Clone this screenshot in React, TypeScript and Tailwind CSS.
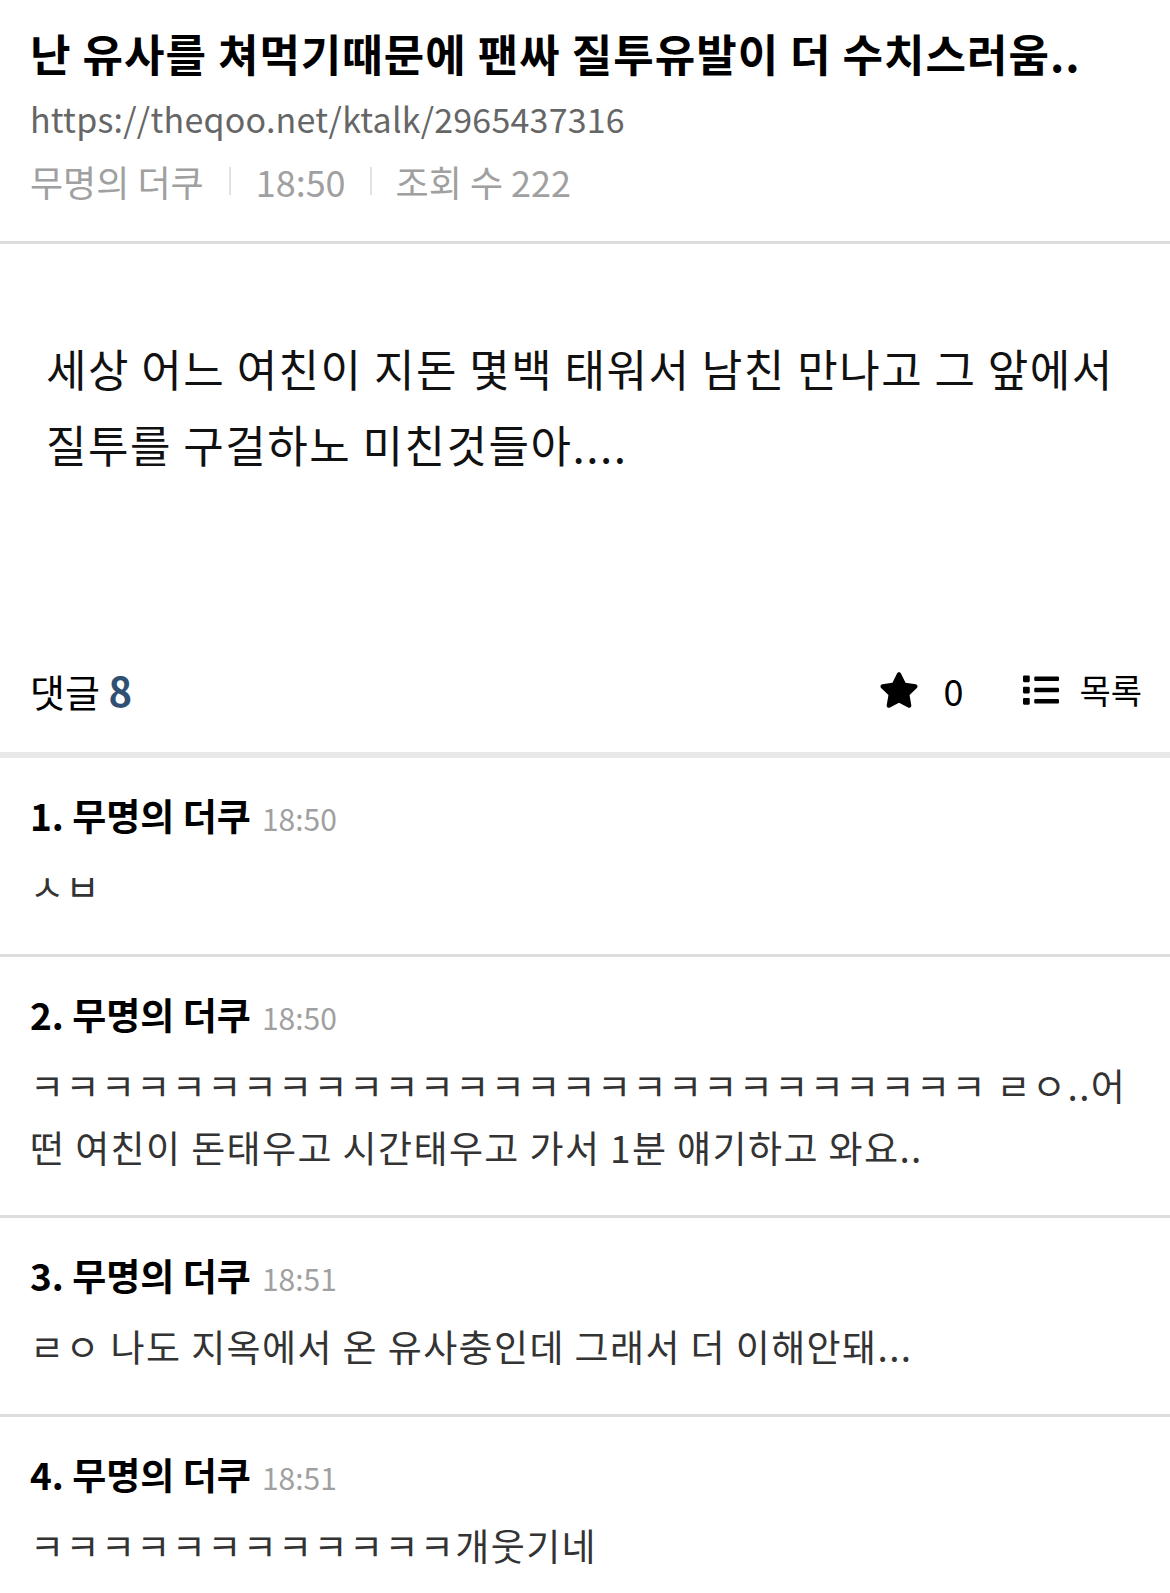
import { FaStar, FaList } from 'react-icons/fa';

interface Comment {
  n: number;
  time: string;
  lines: string[];
}

const comments: Comment[] = [
  { n: 1, time: '18:50', lines: ['ㅅㅂ'] },
  {
    n: 2,
    time: '18:50',
    lines: [
      'ㅋㅋㅋㅋㅋㅋㅋㅋㅋㅋㅋㅋㅋㅋㅋㅋㅋㅋㅋㅋㅋㅋㅋㅋㅋㅋㅋ ㄹㅇ..어',
      '떤 여친이 돈태우고 시간태우고 가서 1분 얘기하고 와요..',
    ],
  },
  { n: 3, time: '18:51', lines: ['ㄹㅇ 나도 지옥에서 온 유사충인데 그래서 더 이해안돼...'] },
  { n: 4, time: '18:51', lines: ['ㅋㅋㅋㅋㅋㅋㅋㅋㅋㅋㅋㅋ개웃기네'] },
];

export default function App() {
  return (
    <div className="min-h-screen bg-white font-['Noto_Sans_CJK_KR','Noto_Sans',sans-serif] text-black">
      {/* 글 헤더 */}
      <header className="px-[30px] pt-[25px] pb-[38px] border-b-[3px] border-[#dddddd]">
        <h1 className="text-[44px] leading-[56px] font-bold tracking-[1px] whitespace-nowrap">
          난 유사를 쳐먹기때문에 팬싸 질투유발이 더 수치스러움..
        </h1>
        <div className="mt-[16px] text-[34px] leading-[44px] tracking-[0.2px] text-[#666666]">
          https://theqoo.net/ktalk/2965437316
        </div>
        <div className="mt-[18px] flex items-center text-[36px] leading-[44px] text-[#a0a0a0]">
          <span>무명의 더쿠</span>
          <span className="mx-[25px] h-[28px] w-[2px] bg-[#e2e2e2]" />
          <span>18:50</span>
          <span className="mx-[24px] h-[28px] w-[2px] bg-[#e2e2e2]" />
          <span>조회 수 222</span>
        </div>
      </header>

      {/* 본문 */}
      <article className="pl-[46px] pr-[40px] pt-[86px] pb-[145px] text-[44px] leading-[76px] tracking-[1.5px] text-[#111111] break-keep">
        세상 어느 여친이 지돈 몇백 태워서 남친 만나고 그 앞에서 질투를 구걸하노 미친것들아....
      </article>

      {/* 댓글 바 */}
      <div className="flex h-[131px] items-center justify-between pl-[30px] pr-[28px] border-b-[6px] border-[#e8e8e8]">
        <div className="text-[38px]">
          댓글 <span className="text-[40px] font-bold text-[#2f4f73]">8</span>
        </div>
        <div className="flex items-center">
          <FaStar className="h-[40px] w-[40px]" />
          <span className="ml-[24px] text-[36px]">0</span>
          <FaList className="ml-[60px] h-[36px] w-[36px]" />
          <span className="ml-[20px] text-[34px]">목록</span>
        </div>
      </div>

      {/* 댓글 목록 */}
      <ul>
        {comments.map((c) => (
          <li key={c.n} className="px-[30px] pt-[31px] pb-[37px] border-b-[3px] border-[#dddddd]">
            <div className="flex items-baseline h-[52px] leading-[52px]">
              <span className="text-[37px] font-bold">
                {c.n}. 무명의 더쿠
              </span>
              <span className="ml-[11px] text-[30px] text-[#a0a0a0]">{c.time}</span>
            </div>
            <div className="mt-[14px] text-[37px] leading-[62px] tracking-[1.4px] text-[#333333]">
              {c.lines.map((l, i) => (
                <div key={i} className="whitespace-nowrap">
                  {l}
                </div>
              ))}
            </div>
          </li>
        ))}
      </ul>
    </div>
  );
}
